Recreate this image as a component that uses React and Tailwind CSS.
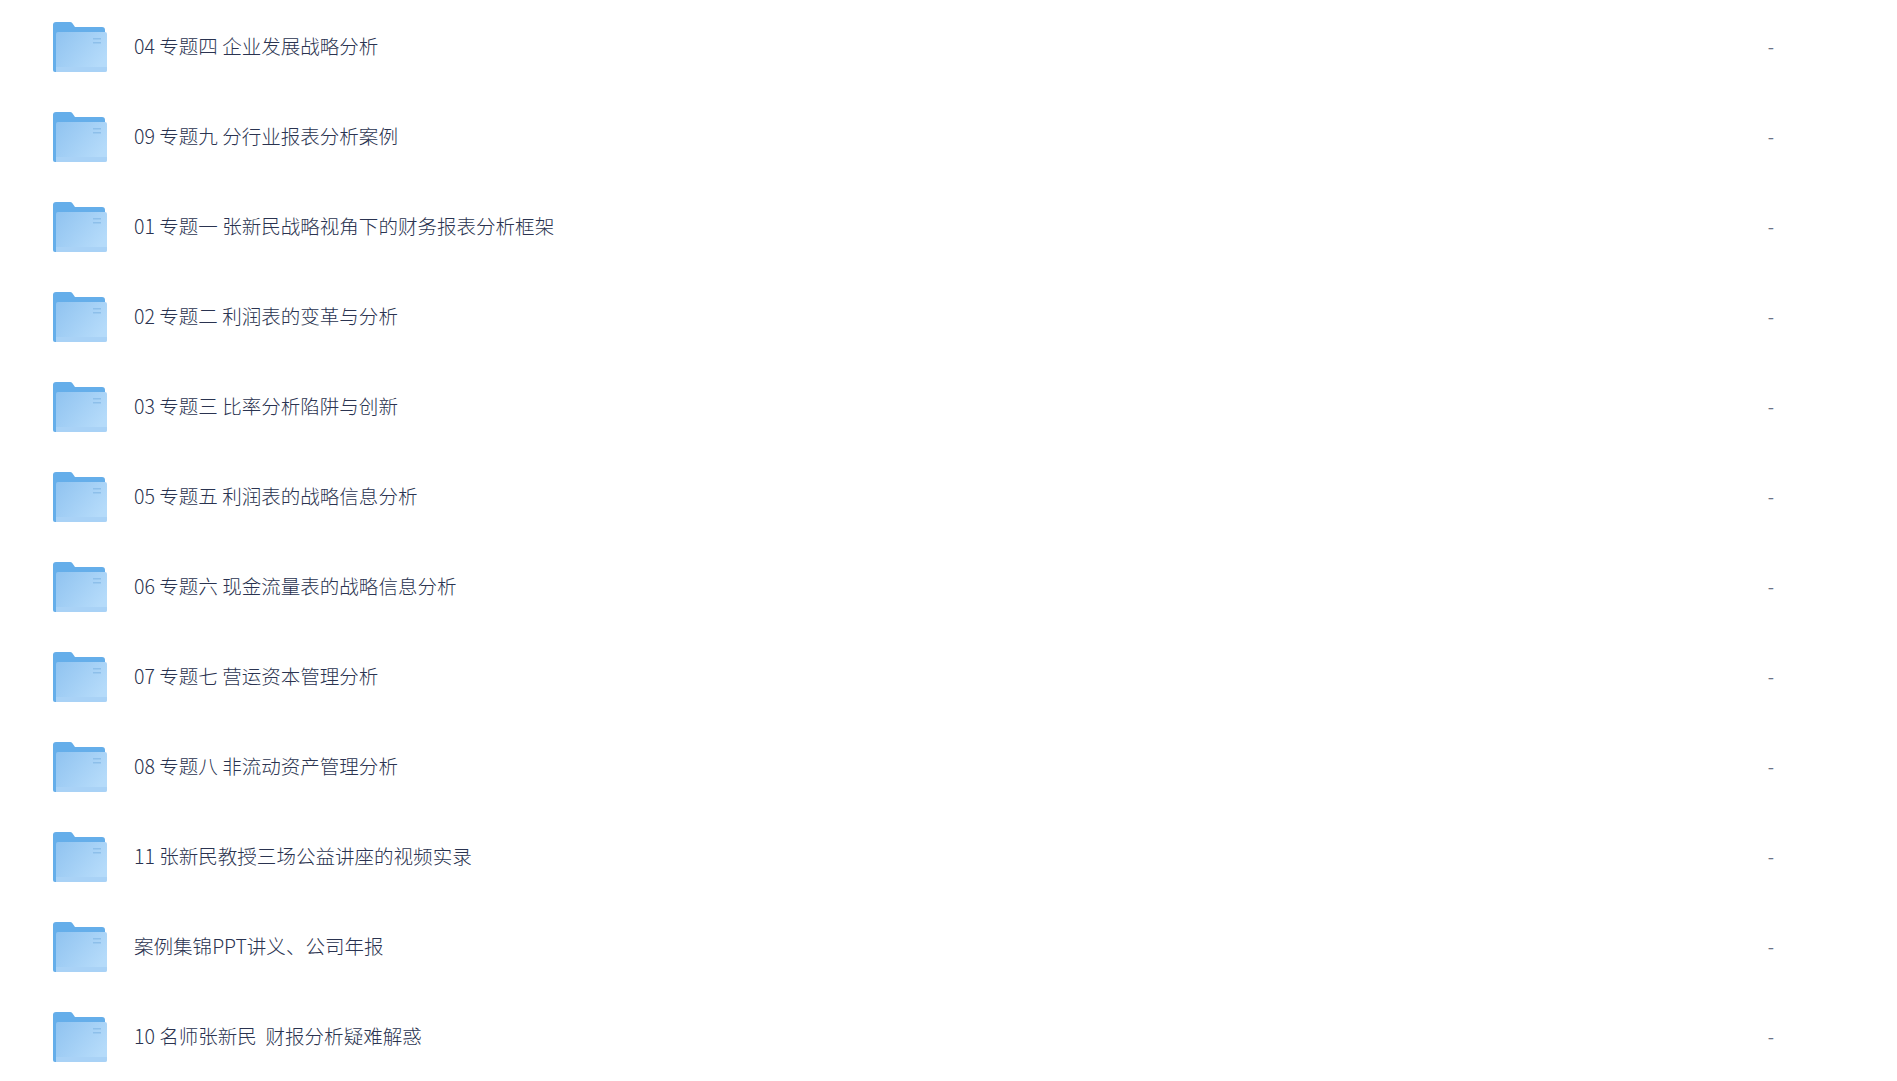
const rows = [
  '04 专题四 企业发展战略分析',
  '09 专题九 分行业报表分析案例',
  '01 专题一 张新民战略视角下的财务报表分析框架',
  '02 专题二 利润表的变革与分析',
  '03 专题三 比率分析陷阱与创新',
  '05 专题五 利润表的战略信息分析',
  '06 专题六 现金流量表的战略信息分析',
  '07 专题七 营运资本管理分析',
  '08 专题八 非流动资产管理分析',
  '11 张新民教授三场公益讲座的视频实录',
  '案例集锦PPT讲义、公司年报',
  '10 名师张新民  财报分析疑难解惑',
];

function FolderIcon() {
  return (
    <svg width="55" height="52" viewBox="0 0 55 52" className="mt-[3px] shrink-0">
      <defs>
        <linearGradient id="front" x1="0" y1="0" x2="1" y2="0.6">
          <stop offset="0" stopColor="#90c3f0" />
          <stop offset="1" stopColor="#b5dbfa" />
        </linearGradient>
      </defs>
      <path d="M1 3a3 3 0 0 1 3-3h14a3 3 0 0 1 2.4 1.2L23 5h27a3 3 0 0 1 3 3v39a3 3 0 0 1-3 3H3a2 2 0 0 1-2-2z" fill="#65aeea" />
      <path d="M4 12a2 2 0 0 1 2-2h47a2 2 0 0 1 2 2v36a2 2 0 0 1-2 2H4z" fill="url(#front)" />
      <path d="M4 45h51v3a2 2 0 0 1-2 2H4z" fill="#a9d2f6" />
      <rect x="41" y="16" width="8" height="1.5" fill="#8dbfea" />
      <rect x="41" y="20" width="8" height="1.5" fill="#8dbfea" />
    </svg>
  );
}

export default function App() {
  return (
    <div className="h-[1081px] overflow-hidden bg-white pt-px font-['Noto_Sans_CJK_SC','Noto_Sans',sans-serif]">
      {rows.map((name) => (
        <div key={name} className="flex h-[90px] items-center pl-[52px]">
          <FolderIcon />
          <div className="ml-[27px] flex-1 whitespace-pre text-[19.55px] font-light text-[#2a3350]">{name}</div>
          <div className="mr-[123px] text-[18px] text-[#6b7285]">-</div>
        </div>
      ))}
    </div>
  );
}
